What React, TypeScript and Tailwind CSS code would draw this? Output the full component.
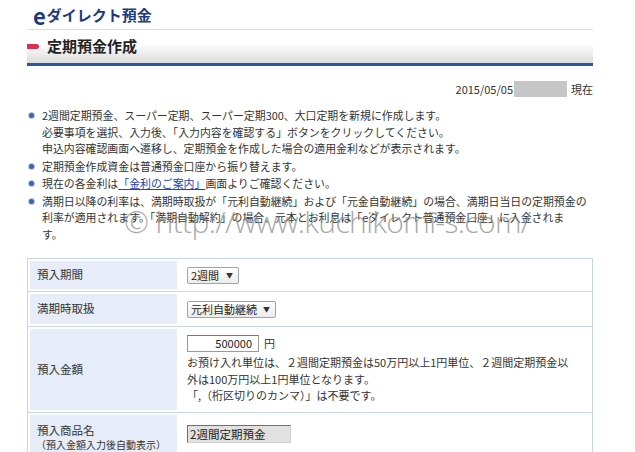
import React from "react";

const font = { fontFamily: '"Noto Sans CJK JP", "Noto Sans", sans-serif' };

function Bullet({ children }: { children: React.ReactNode }) {
  return (
    <li className="relative pl-[15px]">
      <span className="absolute left-[2px] top-[6px] w-[5px] h-[5px] rounded-full bg-[#3f63ad] ring-1 ring-[#b9c7e6]" />
      {children}
    </li>
  );
}

function FakeSelect({ label, width }: { label: string; width: string }) {
  return (
    <div
      className={`${width} h-[17px] flex items-center justify-between pl-[3px] pr-[5px] border border-[#a3a3a3] rounded-[2px] bg-linear-to-b from-white to-[#ececec] text-[11px] text-[#222]`}
    >
      <span>{label}</span>
      <span className="text-[7px] text-[#333]">▼</span>
    </div>
  );
}

function Row({
  label,
  children,
  className = "",
  last = false,
}: {
  label: React.ReactNode;
  children: React.ReactNode;
  className?: string;
  last?: boolean;
}) {
  return (
    <div className={`flex ${last ? "" : "border-b border-[#c9d7ef]"} ${className}`}>
      <div className="w-[147px] m-[2px] mr-0 bg-[#e6ecf8] flex items-center pl-[7px] text-[11.5px] text-[#333]">
        {label}
      </div>
      <div className="flex-1 pl-[10px] flex items-center">{children}</div>
    </div>
  );
}

export default function App() {
  return (
    <div className="relative w-[635px] h-[452px] overflow-hidden bg-white text-[#333]" style={font}>
      {/* page title */}
      <div className="h-[29px] pl-[33px] flex items-center text-[#1c3b7c] font-bold">
        <span className="text-[22px] leading-[24px] mr-[1px]">e</span>
        <span className="text-[15px] leading-none">ダイレクト預金</span>
      </div>

      <div className="ml-[27px] w-[566px]">
        {/* section header */}
        <div className="border-t border-[#dcdcdc] h-[37px] bg-linear-to-b from-white from-40% to-[#dcdcdc] border-b-[3px] border-b-[#2c56a3] flex items-center">
          <span className="w-[12px] h-[5px] rounded-r-full bg-[#d8304f] mr-[8px]" />
          <span className="text-[15px] font-bold text-[#222]">定期預金作成</span>
        </div>

        {/* date */}
        <div className="mt-[15px] h-[16px] flex justify-end items-center text-[11px]">
          <span>2015/05/05</span>
          <span className="w-[53px] h-[16px] bg-[#c6c6c6] ml-[1px] mr-[4px]" />
          <span>現在</span>
        </div>

        {/* notes */}
        <ul className="mt-[10px] text-[10.9px] leading-[16.5px] flex flex-col gap-[1px] text-[#333] whitespace-nowrap">
          <Bullet>
            2週間定期預金、スーパー定期、スーパー定期300、大口定期を新規に作成します。
            <br />
            必要事項を選択、入力後、「入力内容を確認する」ボタンをクリックしてください。
            <br />
            申込内容確認画面へ遷移し、定期預金を作成した場合の適用金利などが表示されます。
          </Bullet>
          <Bullet>定期預金作成資金は普通預金口座から振り替えます。</Bullet>
          <Bullet>
            現在の各金利は
            <span className="text-[#1a44b8] underline">「金利のご案内」</span>
            画面よりご確認ください。
          </Bullet>
          <Bullet>
            満期日以降の利率は、満期時取扱が「元利自動継続」および「元金自動継続」の場合、満期日当日の定期預金の
            <br />
            利率が適用されます。「満期自動解約」の場合、元本とお利息は「eダイレクト普通預金口座」に入金されま
            <br />
            す。
          </Bullet>
        </ul>

        {/* form table */}
        <div className="mt-[16px] border border-[#c6d5ee] border-b-0">
          <Row label="預入期間" className="h-[33px]">
            <FakeSelect label="2週間" width="w-[52px]" />
          </Row>
          <Row label="満期時取扱" className="h-[35px]">
            <FakeSelect label="元利自動継続" width="w-[89px]" />
          </Row>
          <Row label="預入金額" className="h-[86px]">
            <div className="flex flex-col self-start pt-[8px]">
              <div className="flex items-center">
                <div className="w-[72px] h-[17px] border border-[#9a9a9a] border-t-[#777] bg-white text-right pr-[6px] text-[11px] leading-[15px] text-[#222]">
                  500000
                </div>
                <span className="ml-[5px] text-[11px]">円</span>
              </div>
              <p className="mt-[2px] text-[11px] leading-[16.5px] whitespace-nowrap">
                お預け入れ単位は、２週間定期預金は50万円以上1円単位、２週間定期預金以
                <br />
                外は100万円以上1円単位となります。
                <br />
                「,（桁区切りのカンマ）」は不要です。
              </p>
            </div>
          </Row>
          <Row
            last
            className="h-[60px]"
            label={
              <div className="self-start pt-[7px]">
                <div className="leading-[16px]">預入商品名</div>
                <div className="text-[10px] leading-[14px] -ml-[1px]">（預入金額入力後自動表示）</div>
              </div>
            }
          >
            <div className="self-start mt-[12px] w-[104px] h-[18px] bg-[#e1e1e1] border border-[#cfcfcf] border-l-[#6f6f6f] border-t-[#6f6f6f] pl-[2px] text-[11.5px] leading-[16px] text-[#222]">
              2週間定期預金
            </div>
          </Row>
        </div>
      </div>

      {/* watermark */}
      <div
        className="absolute left-[124px] top-[207px] text-[30px] tracking-[-0.6px] leading-none font-light text-[#8c8c8c] opacity-75 whitespace-nowrap pointer-events-none"
        style={{ fontFamily: '"Open Sans", sans-serif' }}
      >
        © http://www.kuchikomi-s.com/
      </div>
    </div>
  );
}
